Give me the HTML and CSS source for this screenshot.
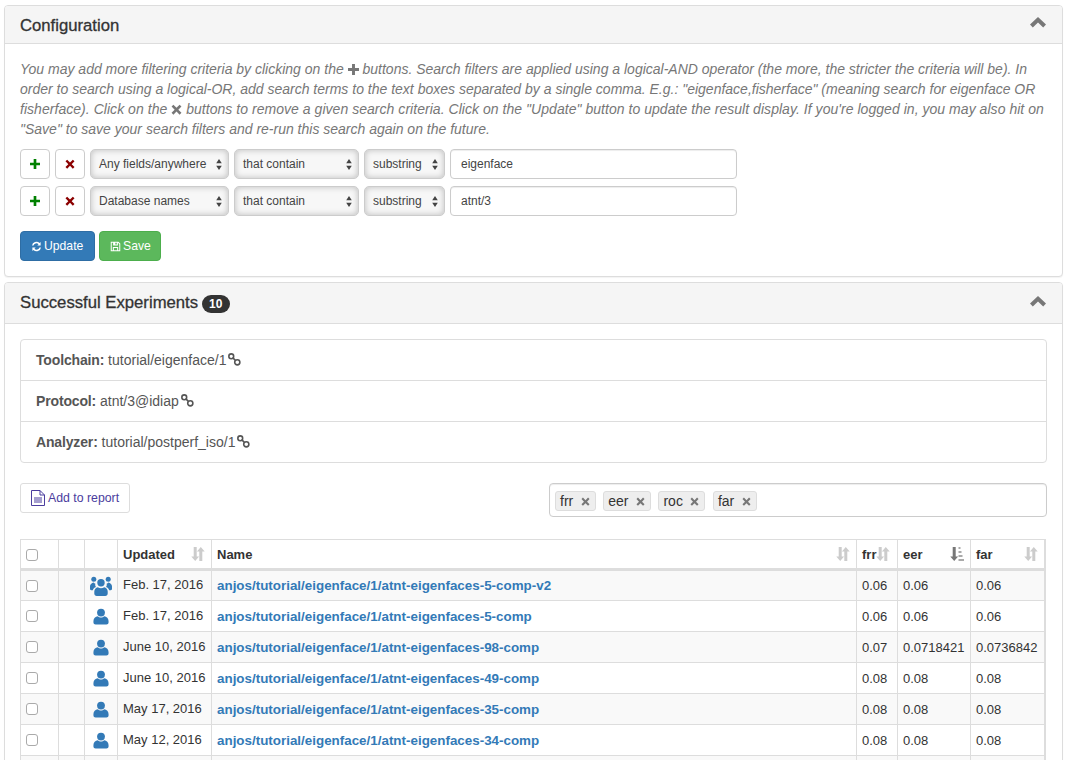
FILE: index.html
```html
<!DOCTYPE html>
<html lang="en">
<head>
<meta charset="utf-8">
<title>Search</title>
<link rel="stylesheet" href="styles.css">
</head>
<body>
<svg class="defs" aria-hidden="true">
  <symbol id="i-plus" viewBox="0 0 12 12"><path d="M4.400 0h3.200v4.400H12v3.200H7.600V12H4.400V7.600H0V4.400h4.400z"/></symbol>
  <symbol id="i-x" viewBox="0 0 12 12"><path d="M2.600.8 6 4.200 9.400.8l2 2L8 6.200l3.400 3.400-2 2L6 8.200l-3.400 3.400-2-2L4 6.200.6 2.800z"/></symbol>
  <symbol id="i-chev" viewBox="0 0 16 11"><path d="M8 0l8 7.600-2.800 2.800L8 5.400l-5.200 5L0 7.600z"/></symbol>
  <symbol id="i-arrows" viewBox="0 0 6 11"><path d="M3 0l2.800 4.300H.2zM3 11L.2 6.700h5.600z"/></symbol>
  <symbol id="i-user" viewBox="0 0 18 18"><circle cx="9" cy="4.600" r="4.400"/><path d="M5.400 8.600c1 1 2.200 1.400 3.600 1.400s2.600-.4 3.600-1.400c2.800.6 4.900 2.300 4.900 5.400v1.800c0 1.300-1 2.200-2.400 2.200H2.900C1.500 18 .5 17.100.5 15.800V14c0-3.100 2.100-4.800 4.900-5.400z"/></symbol>
  <symbol id="i-group" viewBox="0 0 22 20"><circle cx="3.800" cy="3.200" r="2.500"/><circle cx="18.200" cy="3.200" r="2.500"/><circle cx="11" cy="6.800" r="3.700"/><path d="M3.700 6.500c.4.600.9 1 1.700 1.200-.4 1.200-.1 2.200.6 3.200-1.700.6-2.800 1.700-3.200 3.300H1.300C.5 14.200 0 13.700 0 13v-2.500c0-2 1.500-3.500 3.700-4zM18.300 6.500c2.200.5 3.700 2 3.700 4V13c0 .7-.5 1.200-1.300 1.200h-1.500c-.4-1.600-1.500-2.700-3.200-3.300.7-1 1-2 .6-3.200.8-.2 1.300-.6 1.700-1.200zM7.800 11.300c1.800 1.300 4.600 1.300 6.400 0 2 .6 3.500 2 3.500 4.100v2.200c0 1.400-1 2.400-2.400 2.400H6.700c-1.400 0-2.400-1-2.400-2.400v-2.200c0-2.100 1.500-3.500 3.500-4.100z"/></symbol>
  <symbol id="i-sort" viewBox="0 0 14 14"><path d="M2.700 0h3v9.500h2.400L4.200 14 .3 9.500h2.400zM8.300 4.500h3V14h-3zM9.800 0l3.900 4.500H5.900z"/></symbol>
  <symbol id="i-link" viewBox="0 0 14 14"><g fill="none" stroke="currentColor" stroke-width="1.700"><circle cx="3.500" cy="3.500" r="2.600"/><circle cx="10" cy="10" r="2.800"/><path d="M5 5l3.200 3.200"/></g></symbol>
</svg>

<main class="page">
  <section class="panel">
    <header class="panel-head">
      <h3 class="panel-title">Configuration</h3>
      <svg class="chev"><use href="#i-chev"/></svg>
    </header>
    <div class="panel-body">
      <p class="help">You may add more filtering criteria by clicking on the <svg class="help-icon"><use href="#i-plus"/></svg> buttons. Search filters are applied using a logical-AND operator (the more, the stricter the criteria will be). In<br>order to search using a logical-OR, add search terms to the text boxes separated by a single comma. E.g.: "eigenface,fisherface" (meaning search for eigenface OR<br><span class="wide">fisherface). Click on the <svg class="help-icon"><use href="#i-x"/></svg> buttons to remove a given search criteria. Click on the "Update" button to update the result display. If you're logged in, you may also hit on</span><br>"Save" to save your search filters and re-run this search again on the future.</p>

      <div class="filter">
        <button class="btn-icon add" type="button"><svg><use href="#i-plus"/></svg></button>
        <button class="btn-icon del" type="button"><svg><use href="#i-x"/></svg></button>
        <div class="sel sel-field"><span>Any fields/anywhere</span><svg><use href="#i-arrows"/></svg></div>
        <div class="sel sel-op"><span>that contain</span><svg><use href="#i-arrows"/></svg></div>
        <div class="sel sel-kind"><span>substring</span><svg><use href="#i-arrows"/></svg></div>
        <input class="term" type="text" value="eigenface">
      </div>
      <div class="filter">
        <button class="btn-icon add" type="button"><svg><use href="#i-plus"/></svg></button>
        <button class="btn-icon del" type="button"><svg><use href="#i-x"/></svg></button>
        <div class="sel sel-field"><span>Database names</span><svg><use href="#i-arrows"/></svg></div>
        <div class="sel sel-op"><span>that contain</span><svg><use href="#i-arrows"/></svg></div>
        <div class="sel sel-kind"><span>substring</span><svg><use href="#i-arrows"/></svg></div>
        <input class="term" type="text" value="atnt/3">
      </div>

      <div class="actions">
        <button class="btn btn-blue" type="button">
          <svg class="btn-glyph" viewBox="0 0 12 12"><path d="M10.500 1.200v3.600H6.900l1.300-1.300A3.300 3.300 0 0 0 2.700 5H1.100a4.900 4.900 0 0 1 8.200-2.900zM1.500 10.800V7.200h3.600L3.800 8.500A3.300 3.300 0 0 0 9.300 7h1.600a4.900 4.900 0 0 1-8.200 2.900z"/></svg>Update
        </button>
        <button class="btn btn-green" type="button">
          <svg class="btn-glyph" viewBox="0 0 12 12"><path fill-rule="evenodd" d="M.8.800h8.400l2 2v8.400H.8zM1.900 1.900v8.200h1.200V6.500h5.800v3.600h1.200V3.300L8.600 1.900v3H3.400v-3zM5.800 1.900v2h1.600v-2zM4.200 7.500v2.600h3.600V7.500z"/></svg>Save
        </button>
      </div>
    </div>
  </section>

  <section class="panel">
    <header class="panel-head tall">
      <h3 class="panel-title">Successful Experiments <span class="badge">10</span></h3>
      <svg class="chev"><use href="#i-chev"/></svg>
    </header>
    <div class="panel-body">
      <ul class="info">
        <li><b>Toolchain:</b> tutorial/eigenface/1<svg class="link"><use href="#i-link"/></svg></li>
        <li><b>Protocol:</b> atnt/3@idiap<svg class="link"><use href="#i-link"/></svg></li>
        <li><b>Analyzer:</b> tutorial/postperf_iso/1<svg class="link"><use href="#i-link"/></svg></li>
      </ul>

      <div class="tools">
        <button class="btn-report" type="button">
          <svg viewBox="0 0 14 16"><path fill="none" stroke="currentColor" d="M.5.500h8.500l4.500 4.500v10.500H.5zM9 .5V5h4.500M3 8h8M3 10h8M3 12h8"/></svg>Add to report
        </button>
        <div class="tags">
          <span class="tag">frr <svg><use href="#i-x"/></svg></span>
          <span class="tag">eer <svg><use href="#i-x"/></svg></span>
          <span class="tag">roc <svg><use href="#i-x"/></svg></span>
          <span class="tag">far <svg><use href="#i-x"/></svg></span>
        </div>
      </div>

      <table class="results">
        <colgroup>
          <col class="c-check"><col class="c-blank"><col class="c-icon"><col class="c-date"><col class="c-name"><col class="c-frr"><col class="c-eer"><col class="c-far">
        </colgroup>
        <thead>
          <tr>
            <th><input type="checkbox"></th><th></th><th></th>
            <th class="sortable">Updated<svg><use href="#i-sort"/></svg></th>
            <th class="sortable">Name<svg><use href="#i-sort"/></svg></th>
            <th class="sortable tight">frr<svg><use href="#i-sort"/></svg></th>
            <th class="sortable active">eer<svg viewBox="0 0 14 14"><path d="M2.700 0h3v9.500h2.400L4.200 14 .3 9.500h2.400z"/><path class="bars" d="M8.500 0h2v2h-2zM8.500 4h3v2h-3zM8.500 8h4v2h-4zM8.500 12h5.500v2H8.500z"/></svg></th>
            <th class="sortable">far<svg><use href="#i-sort"/></svg></th>
          </tr>
        </thead>
        <tbody>
          <tr><td><input type="checkbox"></td><td></td><td class="who"><svg class="group"><use href="#i-group"/></svg></td><td class="date">Feb. 17, 2016</td><td><a href="#">anjos/tutorial/eigenface/1/atnt-eigenfaces-5-comp-v2</a></td><td>0.06</td><td>0.06</td><td>0.06</td></tr>
          <tr><td><input type="checkbox"></td><td></td><td class="who"><svg><use href="#i-user"/></svg></td><td class="date">Feb. 17, 2016</td><td><a href="#">anjos/tutorial/eigenface/1/atnt-eigenfaces-5-comp</a></td><td>0.06</td><td>0.06</td><td>0.06</td></tr>
          <tr><td><input type="checkbox"></td><td></td><td class="who"><svg><use href="#i-user"/></svg></td><td class="date">June 10, 2016</td><td><a href="#">anjos/tutorial/eigenface/1/atnt-eigenfaces-98-comp</a></td><td>0.07</td><td>0.0718421</td><td>0.0736842</td></tr>
          <tr><td><input type="checkbox"></td><td></td><td class="who"><svg><use href="#i-user"/></svg></td><td class="date">June 10, 2016</td><td><a href="#">anjos/tutorial/eigenface/1/atnt-eigenfaces-49-comp</a></td><td>0.08</td><td>0.08</td><td>0.08</td></tr>
          <tr><td><input type="checkbox"></td><td></td><td class="who"><svg><use href="#i-user"/></svg></td><td class="date">May 17, 2016</td><td><a href="#">anjos/tutorial/eigenface/1/atnt-eigenfaces-35-comp</a></td><td>0.08</td><td>0.08</td><td>0.08</td></tr>
          <tr><td><input type="checkbox"></td><td></td><td class="who"><svg><use href="#i-user"/></svg></td><td class="date">May 12, 2016</td><td><a href="#">anjos/tutorial/eigenface/1/atnt-eigenfaces-34-comp</a></td><td>0.08</td><td>0.08</td><td>0.08</td></tr>
          <tr class="cut"><td></td><td></td><td></td><td></td><td></td><td></td><td></td><td></td></tr>
        </tbody>
      </table>
    </div>
  </section>
</main>
</body>
</html>
```

FILE: styles.css
```css
* { box-sizing: border-box; }
html, body { height: 760px; overflow: hidden; }
body { margin: 0; background: #fff; color: #333; font: 14px/20px "Liberation Sans", Arial, sans-serif; }
.defs { display: none; }
.page { display: flex; flex-direction: column; gap: 5px; padding: 5px 5px 0 4px; }

.panel { border: 1px solid #ddd; border-radius: 4px; box-shadow: 0 1px 1px rgba(0,0,0,.05); background: #fff; }
.panel-head { display: flex; align-items: center; justify-content: space-between; height: 38px; padding: 0 16px 0 15px; background: #f5f5f5; border-bottom: 1px solid #ddd; border-radius: 3px 3px 0 0; }
.panel-head.tall { height: 41px; }
.panel-title { margin: 2px 0 0; font-size: 16.7px; font-weight: 400; line-height: 18px; color: #333; -webkit-text-stroke: .3px #333; }
.tall .panel-title { margin-top: 0; }
.chev { width: 16px; height: 11px; fill: #777; margin-top: -4px; }
.panel-body { padding: 15px; }

.help { margin: 0 0 10px; color: #777; font-style: italic; white-space: nowrap; }
.help .wide { letter-spacing: .04px; }
.help-icon { width: 11px; height: 11px; fill: #777; vertical-align: -1px; }

.filter { display: flex; gap: 5px; height: 30px; margin-bottom: 7px; }
.btn-icon { width: 30px; height: 30px; padding: 0; display: flex; align-items: center; justify-content: center; background: #fff; border: 1px solid #ccc; border-radius: 4px; }
.btn-icon svg { width: 10px; height: 10px; }
.add svg { fill: #008000; }
.del svg { fill: #8b0000; }
.sel { display: flex; align-items: center; justify-content: space-between; height: 30px; padding: 0 6px 0 8px; font-size: 12px; color: #444; background: #f7f7f7; border: 1px solid #ccc; border-radius: 5px; box-shadow: inset 0 0 6px rgba(0,0,0,.24); }
.sel svg { width: 6px; height: 11px; fill: #444; }
.sel-field { width: 139px; }
.sel-op { width: 125px; }
.sel-kind { width: 81px; }
.term { width: 287px; height: 30px; padding: 0 10px; font: 12px "Liberation Sans", Arial, sans-serif; color: #444; background: #fff; border: 1px solid #ccc; border-radius: 4px; box-shadow: inset 0 1px 1px rgba(0,0,0,.075); }

.actions { display: flex; gap: 4px; margin-top: 15px; }
.btn { display: flex; align-items: center; gap: 2px; height: 30px; padding: 0 9px 0 10px; font: 12.2px "Liberation Sans", Arial, sans-serif; color: #fff; border: 1px solid; border-radius: 4px; }
.btn-glyph { flex: none; width: 11px; height: 11px; fill: #fff; }
.btn-blue { width: 75px; background: #337ab7; border-color: #2e6da4; }
.btn-green { width: 62px; background: #5cb85c; border-color: #4cae4c; }

.badge { display: inline-block; min-width: 28px; margin-left: -1px; padding: 3px 7px; font-size: 12px; font-weight: 700; line-height: 12px; text-align: center; color: #fff; background: #333; border-radius: 10px; -webkit-text-stroke: 0; }

.info { margin: 0; padding: 0; list-style: none; border: 1px solid #ddd; border-radius: 4px; }
.info li { height: 41px; padding: 10px 15px; border-bottom: 1px solid #ddd; color: #555; }
.info li:last-child { height: 40px; border-bottom: 0; }
.info b { color: #555; letter-spacing: -.15px; }
.link { width: 13px; height: 13px; color: #555; vertical-align: -1px; margin-left: 2px; }

.tools { display: flex; justify-content: space-between; align-items: flex-start; margin-top: 20px; }
.btn-report { display: flex; align-items: center; gap: 3px; width: 110px; height: 30px; padding: 0 0 0 10px; font: 12.3px "Liberation Sans", Arial, sans-serif; color: #4b3d9e; background: #fff; border: 1px solid #ddd; border-radius: 3px; white-space: nowrap; }
.btn-report svg { flex: none; width: 14px; height: 16px; }
.tags { display: flex; align-items: center; gap: 7.5px; width: 498px; height: 34px; padding: 2px 5px 0; border: 1px solid #ccc; border-radius: 4px; box-shadow: inset 0 1px 1px rgba(0,0,0,.075); }
.tag { display: flex; align-items: center; gap: 7.5px; height: 20px; padding: 0 5px 0 4px; font-size: 14px; color: #333; background: #eee; border: 1px solid #ddd; border-radius: 3px; }
.tag svg { width: 9px; height: 9px; fill: #777; }

.results { margin-top: 22px; width: 1024px; table-layout: fixed; border-collapse: collapse; font-size: 13px; line-height: 15px; }
.c-check { width: 38px; } .c-blank { width: 26px; } .c-icon { width: 33px; } .c-date { width: 94px; }
.c-name { width: 645px; } .c-frr { width: 41px; } .c-eer { width: 73px; } .c-far { width: 74px; }
.results th, .results td { border: 1px solid #ddd; padding: 7px 5px; height: 31px; text-align: left; white-space: nowrap; overflow: hidden; }
.results th:last-child, .results td:last-child { border-right-width: 2px; }
.results th { height: 30px; padding-bottom: 6px; font-weight: 700; border-bottom: 3px solid #ddd; }
.results tbody tr:nth-child(odd) { background: #f9f9f9; }
.results input { appearance: none; display: block; width: 12px; height: 12px; margin: 0; background: #fff; border: 1px solid #aaa; border-radius: 3px; }
.sortable svg { float: right; width: 14px; height: 14px; fill: #ccc; margin: 0 1px 0 0; }
.active svg { fill: #777; }
.active .bars { fill: #aaa; }
.tight { padding-right: 0 !important; }
.tight svg { float: none; vertical-align: -2px; margin: 0; }
.results .who { padding: 0; text-align: center; }
.who svg { display: block; width: 16px; height: 17px; margin: 0 auto; fill: #337ab7; }
.who .group { width: 22px; height: 20px; }
.results .date { padding-top: 6px; padding-bottom: 8px; }
.results a { color: #337ab7; font-size: 13.4px; font-weight: 700; text-decoration: none; }
```
